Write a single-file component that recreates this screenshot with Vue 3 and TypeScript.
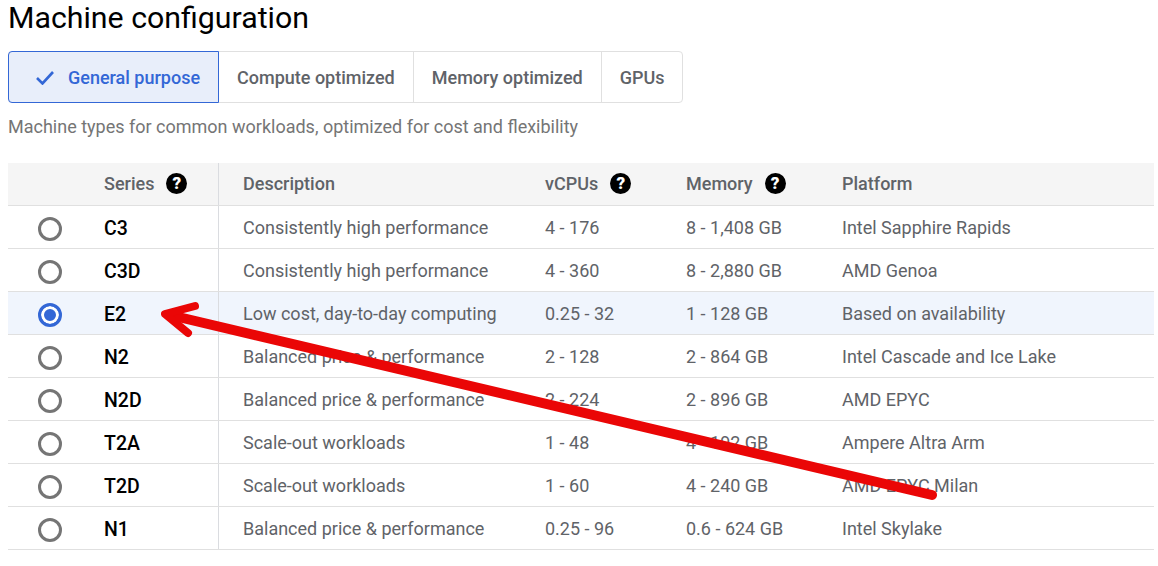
<script setup lang="ts">
interface Row { name: string; desc: string; cpu: string; mem: string; plat: string; selected?: boolean }
const tabs = ['Compute optimized', 'Memory optimized', 'GPUs']
const rows: Row[] = [
  { name: 'C3', desc: 'Consistently high performance', cpu: '4 - 176', mem: '8 - 1,408 GB', plat: 'Intel Sapphire Rapids' },
  { name: 'C3D', desc: 'Consistently high performance', cpu: '4 - 360', mem: '8 - 2,880 GB', plat: 'AMD Genoa' },
  { name: 'E2', desc: 'Low cost, day-to-day computing', cpu: '0.25 - 32', mem: '1 - 128 GB', plat: 'Based on availability', selected: true },
  { name: 'N2', desc: 'Balanced price & performance', cpu: '2 - 128', mem: '2 - 864 GB', plat: 'Intel Cascade and Ice Lake' },
  { name: 'N2D', desc: 'Balanced price & performance', cpu: '2 - 224', mem: '2 - 896 GB', plat: 'AMD EPYC' },
  { name: 'T2A', desc: 'Scale-out workloads', cpu: '1 - 48', mem: '4 - 192 GB', plat: 'Ampere Altra Arm' },
  { name: 'T2D', desc: 'Scale-out workloads', cpu: '1 - 60', mem: '4 - 240 GB', plat: 'AMD EPYC Milan' },
  { name: 'N1', desc: 'Balanced price & performance', cpu: '0.25 - 96', mem: '0.6 - 624 GB', plat: 'Intel Skylake' },
]
</script>

<template>
  <div class="page">
    <h1 class="title">Machine configuration</h1>
    <div class="tabs">
      <div class="tab active">
        <svg class="check" viewBox="0 0 20 16" width="20" height="16"><path d="M2 9l5.5 5.5L18 3" fill="none" stroke="#3367d6" stroke-width="2.6" /></svg>
        General purpose
      </div>
      <div v-for="t in tabs" :key="t" class="tab">{{ t }}</div>
    </div>
    <p class="sub">Machine types for common workloads, optimized for cost and flexibility</p>
    <div class="table">
      <div class="row head">
        <div class="c-radio"></div>
        <div class="c-name">Series<span class="help">?</span></div>
        <div class="c-desc">Description</div>
        <div class="c-cpu">vCPUs<span class="help">?</span></div>
        <div class="c-mem">Memory<span class="help">?</span></div>
        <div class="c-plat">Platform</div>
      </div>
      <div v-for="r in rows" :key="r.name" class="row" :class="{ selected: r.selected }">
        <div class="c-radio"><span class="radio" :class="{ on: r.selected }"></span></div>
        <div class="c-name strong">{{ r.name }}</div>
        <div class="c-desc">{{ r.desc }}</div>
        <div class="c-cpu">{{ r.cpu }}</div>
        <div class="c-mem">{{ r.mem }}</div>
        <div class="c-plat">{{ r.plat }}</div>
      </div>
    </div>
    <svg class="arrow" width="1158" height="566" viewBox="0 0 1158 566">
      <g fill="none" stroke="#ea0606" stroke-linecap="round" stroke-linejoin="round">
        <path d="M932 495L170 315" stroke-width="10" />
        <path d="M195 306L165 314L188 333" stroke-width="8" />
      </g>
    </svg>
  </div>
</template>

<style>
body { background: #fff; }
</style>

<style scoped>
.page {
  position: relative;
  width: 1158px;
  height: 566px;
  overflow: hidden;
  padding: 0 4px 0 8px;
  box-sizing: border-box;
  font-family: Roboto, "Liberation Sans", sans-serif;
  font-size: 18px;
  color: #5f6368;
}
.title {
  margin: 0;
  height: 51px;
  font-size: 30.3px;
  line-height: 36px;
  font-weight: 400;
  color: #000;
}
.tabs {
  display: flex;
  width: 675px;
  height: 52px;
  box-sizing: border-box;
  border: 1px solid #e0e0e0;
  border-radius: 4px;
  font-weight: 500;
  color: #5f6368;
}
.tab {
  flex: none;
  display: flex;
  align-items: center;
  padding: 0 18px;
  border-left: 1px solid #e0e0e0;
  white-space: nowrap;
}
.tab:first-child { border-left: 0; }
.tab:nth-child(2) { border-left: 0; }
.tab.active {
  width: 211px;
  margin: -1px 0 -1px -1px;
  padding: 0 0 0 26px;
  box-sizing: border-box;
  gap: 13px;
  background: #e8eefa;
  border: 1px solid #3367d6;
  border-radius: 4px 0 0 4px;
  color: #3367d6;
}
.sub {
  margin: 0;
  height: 60px;
  padding-top: 14px;
  box-sizing: border-box;
  line-height: 20px;
  color: #757575;
}
.table { width: 1146px; }
.row {
  display: grid;
  grid-template-columns: 96px 115px 326px 141px 156px 1fr;
  height: 43px;
  align-items: center;
  box-sizing: border-box;
  border-bottom: 1px solid #e0e0e0;
}
.row.head { background: #f5f5f5; font-weight: 500; color: #5f6368; }
.row.head > div { padding-bottom: 2px; box-sizing: border-box; }
.row.selected { background: #f0f5fd; }
.row > div { display: flex; align-items: center; height: 100%; white-space: nowrap; }
.c-name { border-right: 1px solid #dadce0; }
.c-desc { padding-left: 24px; }
.strong { font-weight: 500; color: #000; font-size: 19.5px; padding-top: 2px; box-sizing: border-box; }
.help {
  display: inline-flex;
  align-items: center;
  justify-content: center;
  width: 21px;
  height: 21px;
  margin-left: 12px;
  border-radius: 50%;
  background: #000;
  color: #fff;
  font-size: 17px;
  font-weight: 900;
}
.c-radio { padding-left: 30px; box-sizing: border-box; }
.row:not(.head) .c-radio { padding-top: 4px; }
.radio {
  display: block;
  width: 24px;
  height: 24px;
  box-sizing: border-box;
  border: 3px solid #757575;
  border-radius: 50%;
  background: #fff;
}
.radio.on {
  border-color: #3367d6;
  background: #3367d6;
  box-shadow: inset 0 0 0 3px #fff;
}
.arrow { position: absolute; left: 0; top: 0; pointer-events: none; }
</style>
